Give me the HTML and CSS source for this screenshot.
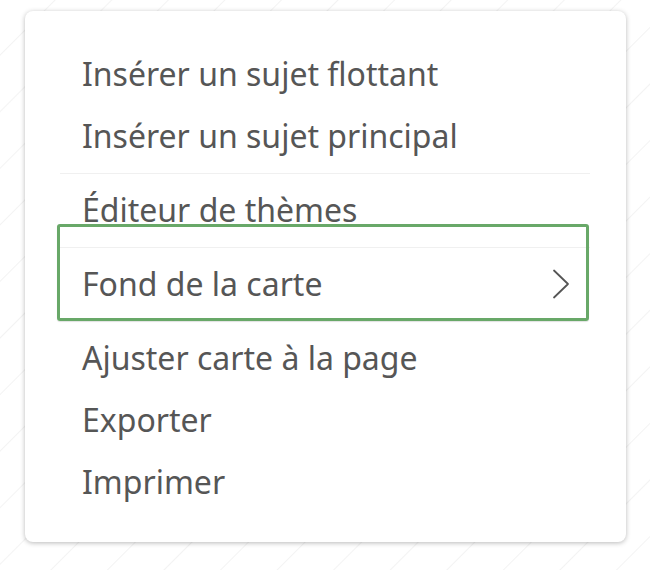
FILE: index.html
```html
<!DOCTYPE html>
<html lang="fr">
<head>
<meta charset="utf-8">
<title>Menu</title>
<link rel="stylesheet" href="styles.css">
</head>
<body>
<div class="page">
  <div class="card">
    <ul class="menu">
      <li class="item">Insérer un sujet flottant</li>
      <li class="item">Insérer un sujet principal</li>
      <li class="sep"></li>
      <li class="item">Éditeur de thèmes</li>
      <li class="group focused">
        <div class="sep"></div>
        <div class="item has-sub">
          <span>Fond de la carte</span>
          <svg class="chev" width="18" height="30" viewBox="0 0 18 30" aria-hidden="true">
            <path d="M2 1.5 L16 15 L2 28.5" fill="none" stroke="#555" stroke-width="1.8" stroke-linecap="round" stroke-linejoin="round"/>
          </svg>
        </div>
      </li>
      <li class="item">Ajuster carte à la page</li>
      <li class="item">Exporter</li>
      <li class="item">Imprimer</li>
    </ul>
  </div>
</div>
</body>
</html>
```

FILE: styles.css
```css
html, body {
  margin: 0;
  padding: 0;
}
body {
  width: 650px;
  height: 570px;
  overflow: hidden;
  background-color: #ffffff;
  background-image: repeating-linear-gradient(135deg, #ffffff 0px, #ffffff 38px, #f3f3f3 39px, #ffffff 40px);
  font-family: "Noto Sans", "Open Sans", sans-serif;
}
.page {
  padding: 11px 24px 0 25px;
}
.card {
  background: #ffffff;
  border-radius: 8px;
  box-shadow: 0 1px 5px rgba(0, 0, 0, 0.28);
  padding: 32px 36px 29px 35px;
}
.menu {
  list-style: none;
  margin: 0;
  padding: 0;
}
.item {
  height: 62px;
  line-height: 62px;
  font-size: 32px;
  color: #565656;
  padding: 0 21px 0 22px;
  white-space: nowrap;
}
.sep {
  height: 1px;
  background: #f0f0f0;
  margin: 6px 0 5px;
}
.group {
  position: relative;
  display: flow-root;
  padding-bottom: 12px;
}
.group.focused::after {
  content: "";
  position: absolute;
  top: -17px;
  left: -3px;
  right: 1px;
  bottom: 6px;
  border: 3px solid #68a868;
  border-radius: 3px;
  box-shadow: 0 1px 1px rgba(0, 0, 0, 0.12);
  pointer-events: none;
}
.has-sub {
  display: flex;
  align-items: center;
  justify-content: space-between;
}
.chev {
  display: block;
  margin-right: -1px;
}
```
